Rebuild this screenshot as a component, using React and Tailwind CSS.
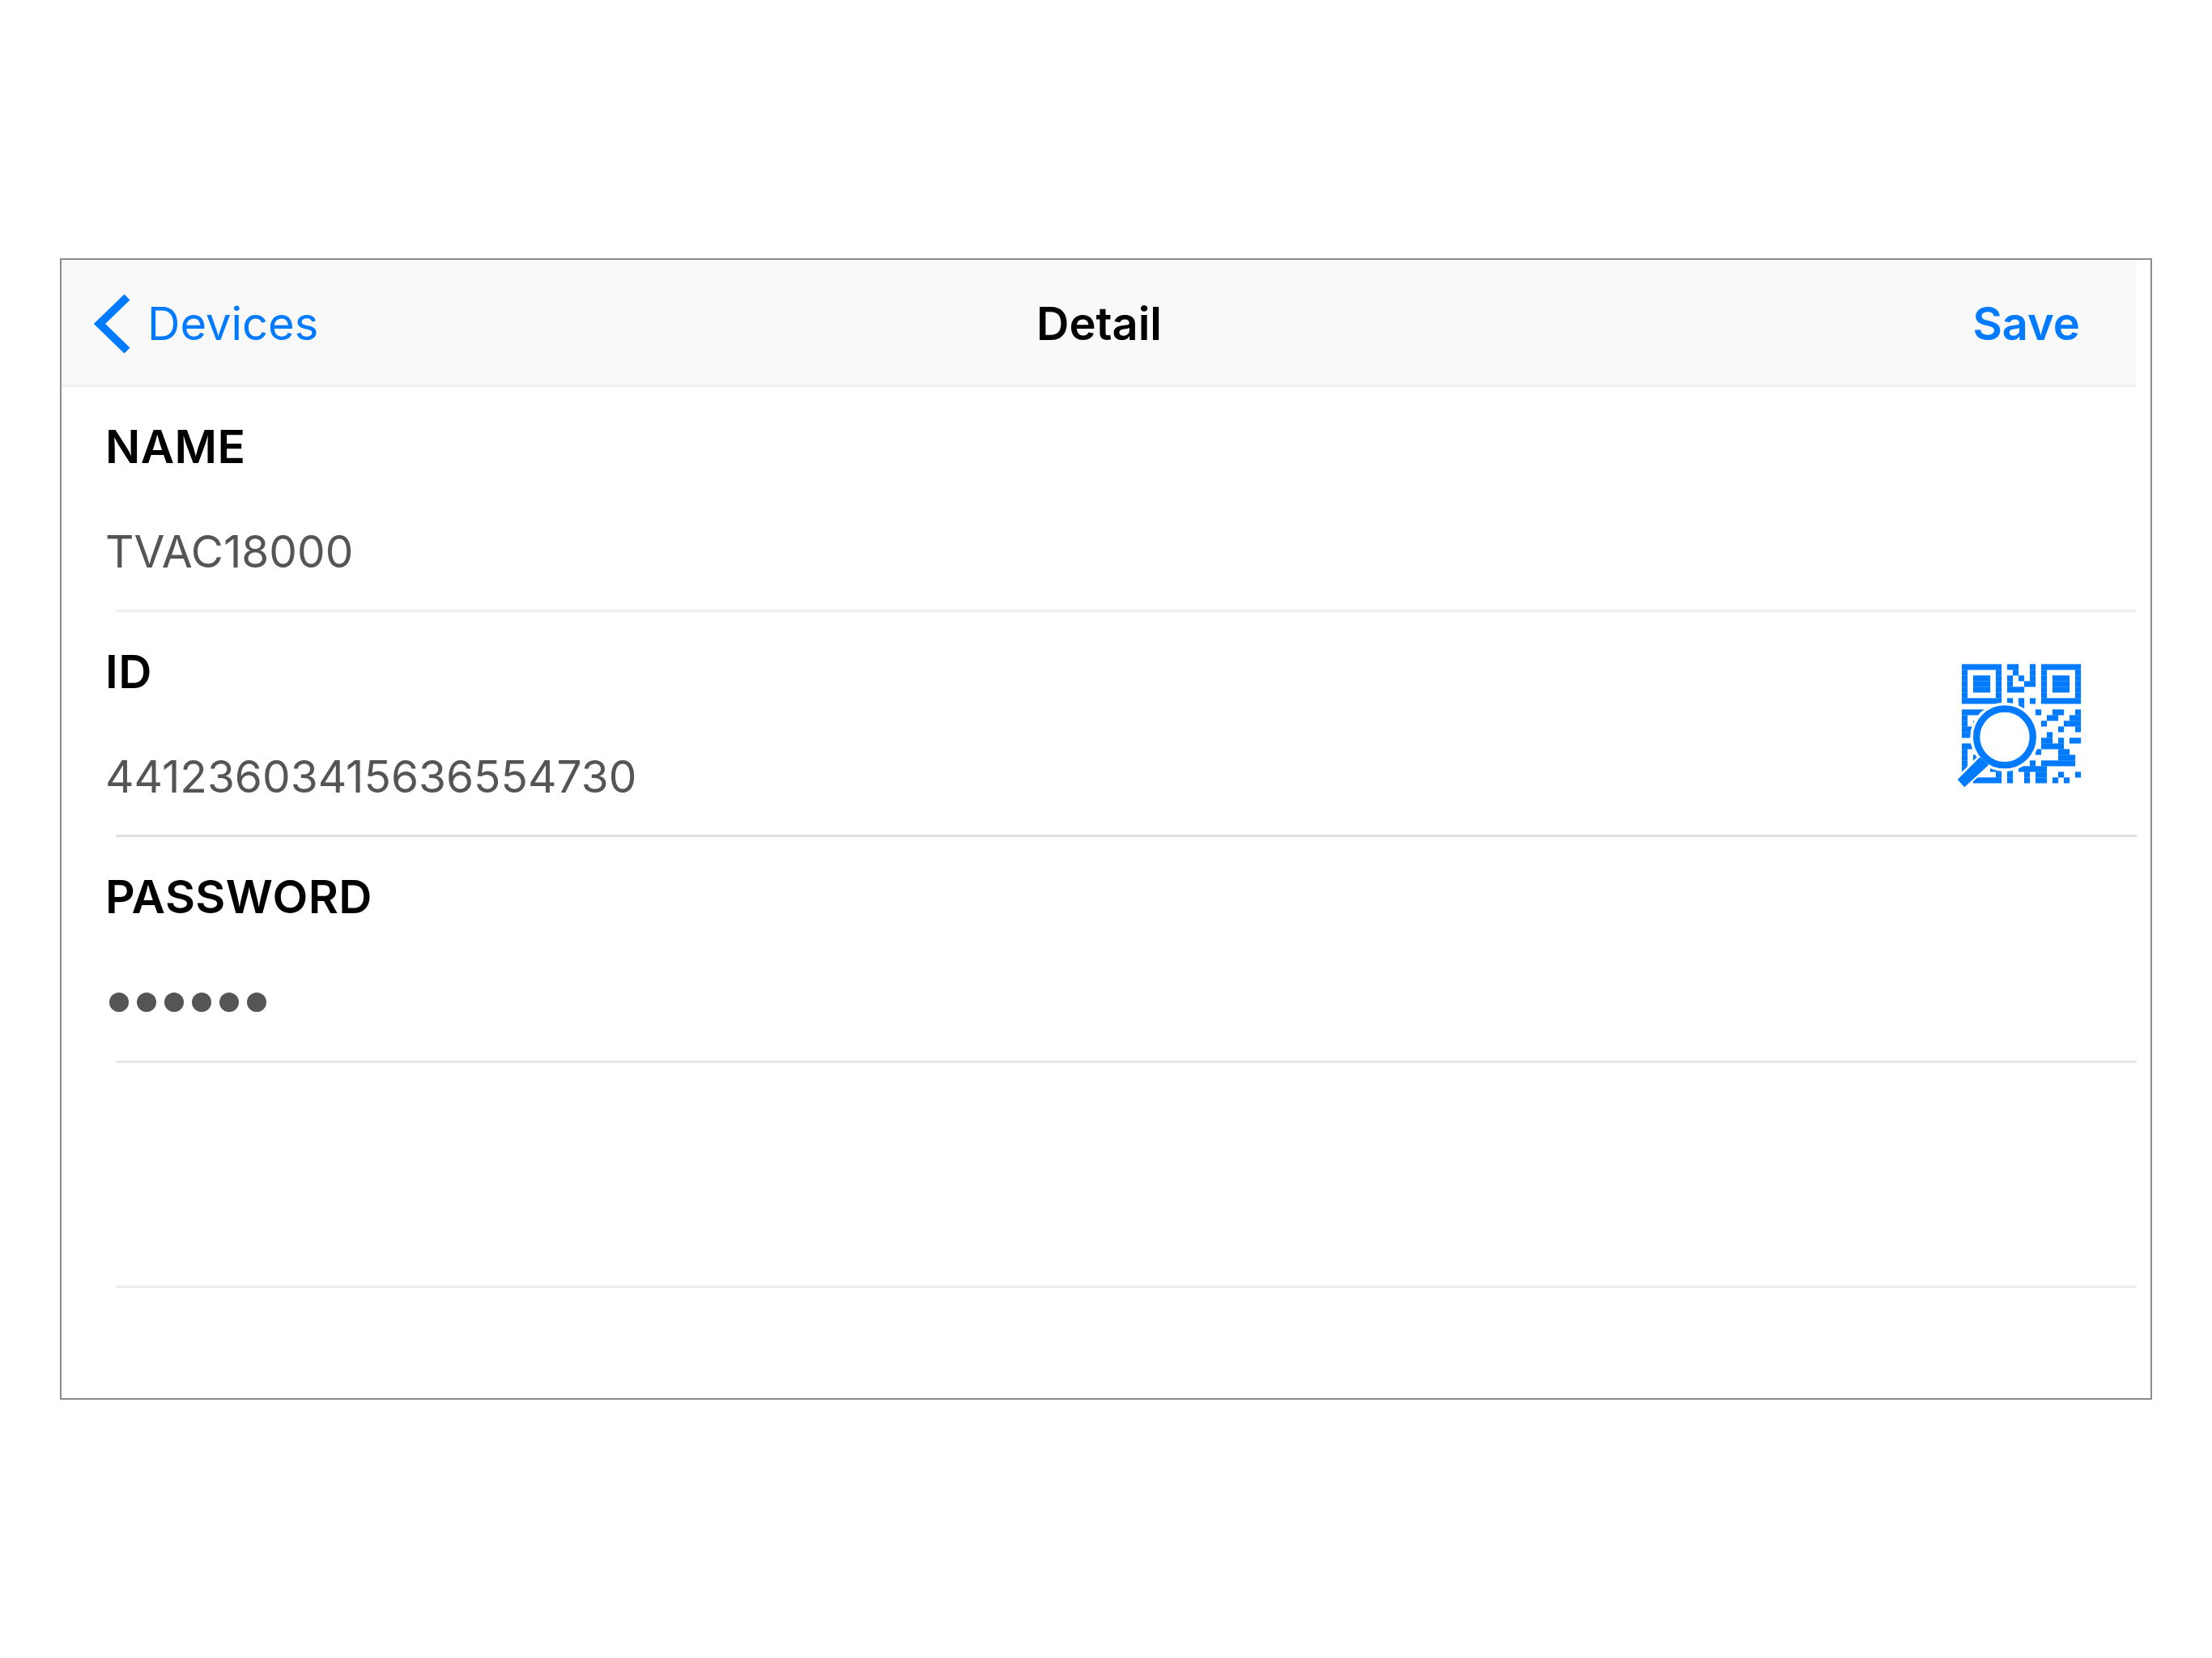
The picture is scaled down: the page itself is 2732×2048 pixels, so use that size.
const F = '[font-family:Inter,sans-serif]';
const blue = '#007aff';

const qrRows = [
  '1111111.11..1.1111111',
  '1.....1..1..1.1.....1',
  '1.111.1.1.1.1.1.111.1',
  '1.111.1.1..11.1.111.1',
  '1.111.1.111...1.111.1',
  '1.....1.......1.....1',
  '1111111.1.1.1.1111111',
  '..........1..........',
  '1111.........1..11..1',
  '1..............11..11',
  '1.1...........1...111',
  '111..............1..1',
  '111............1.....',
  '..............11.1.11',
  '111...........1111...',
  '1............1...11..',
  '1.1..............111.',
  '1...........1.111111.',
  '1....11.1.11111......',
  '......1.1..1.11..1..1',
  '..11111.1..1.11.1.1..',
];

function QrScan() {
  return (
    <svg viewBox="110 88 462 462" className="mt-[5px] h-[154px] w-[154px]">
      {qrRows.map((row, r) =>
        row.split('').map((c, i) =>
          c === '1' ? <rect key={r + '-' + i} x={128 + i * 21} y={92 + r * 21} width="21.4" height="21.4" fill={blue} /> : null
        )
      )}
      <circle cx="287" cy="362" r="128" fill="#fff" />
      <path d="M200 430 L112 516 L138 548 L232 462 Z" fill="#fff" stroke="#fff" strokeWidth="12" />
      <path d="M195 437 L112 520 L138 548 L228 465 Z" fill={blue} />
      <circle cx="287" cy="362" r="104.5" fill="#fff" stroke={blue} strokeWidth="25" />
    </svg>
  );
}

function Sep({ c = 'bg-[#f0f0f0]' }) {
  return <div className={`ml-[67px] h-[3px] ${c}`} />;
}

function Field({ label, children, right, h = 'h-[275px]' }) {
  return (
    <div className={`flex items-center justify-between pl-[54px] pr-[68px] ${h}`}>
      <div className="flex h-full flex-col">
        <div className={`mt-[41px] text-[57px] leading-[66px] font-semibold tracking-[0.4px] text-black ${F}`}>{label}</div>
        {children}
      </div>
      {right}
    </div>
  );
}

function Val({ children }) {
  return <div className={`mt-[63px] text-[55px] leading-[66px] font-normal text-[#555555] ${F}`}>{children}</div>;
}

export default function App() {
  return (
    <div className="h-[2048px] w-[2732px] bg-white pl-[74px] pt-[319px]">
      <div className="h-[1410px] w-[2584px] border-2 border-[#8c8c8c] bg-white pr-[17px]">
        <div className={`flex h-[157px] items-center justify-between border-b-[3px] border-[#efefef] bg-[#f9f9f9] pl-[40px] pr-[70px] pt-[3px] ${F}`}>
          <div className="flex w-[530px] items-center gap-[20px]">
            <svg viewBox="0 0 46 74" className="h-[74px] w-[46px]">
              <path d="M41 4 L7 37 L41 70" fill="none" stroke={blue} strokeWidth="10" />
            </svg>
            <span className="text-[56px] font-normal leading-none text-[#007aff]">Devices</span>
          </div>
          <span className="text-[56px] font-semibold leading-none text-black">Detail</span>
          <span className="flex w-[500px] justify-end text-[56px] font-semibold leading-none text-[#007aff]">Save</span>
        </div>
        <Field label="NAME"><Val>TVAC18000</Val></Field>
        <Sep />
        <Field label="ID" right={<QrScan />}><Val>44123603415636554730</Val></Field>
        <Sep c="bg-[#dcdde0]" />
        <Field label="PASSWORD" h="h-[276px]">
          <div className="mt-[85px] flex gap-[10px] pl-[5px]">
            {[0, 1, 2, 3, 4, 5].map((i) => (
              <span key={i} className="h-[24px] w-[24px] rounded-full bg-[#555555]" />
            ))}
          </div>
        </Field>
        <Sep c="bg-[#e8e8e8]" />
        <div className="h-[275px]" />
        <Sep c="bg-[#ededed]" />
      </div>
    </div>
  );
}
